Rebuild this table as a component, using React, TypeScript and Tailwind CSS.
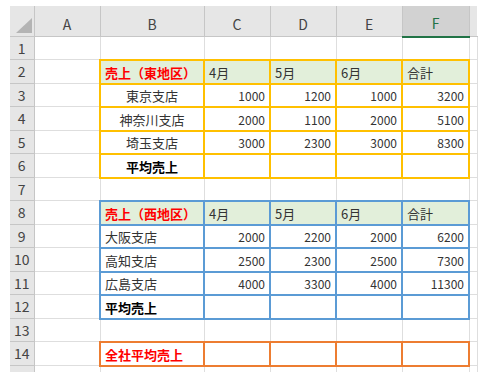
import React from "react";

type Cell = {
    text?: string;
    border: string;
    extra?: string;
};

const GRID = "border border-[#dedede]";
const YEL = "border-2 border-[#ffc000]";
const BLU = "border-2 border-[#5b9bd5]";
const ORG = "border-2 border-[#ed7d31]";

const HEAD_FILL = "bg-[#e2efda]";
const RED = "text-[#ff0000] font-bold";
const NUM = "text-right text-[12px]";

const blank = (n: number): Cell[] => Array.from({length: n}, () => ({border: GRID}));

const tableHead = (title: string, border: string): Cell[] => [
    {border: GRID},
    {text: title, border, extra: `${HEAD_FILL} ${RED}`},
    {text: "4月", border, extra: HEAD_FILL},
    {text: "5月", border, extra: HEAD_FILL},
    {text: "6月", border, extra: HEAD_FILL},
    {text: "合計", border, extra: HEAD_FILL},
    {border: GRID},
];

const dataRow = (name: string, nums: string[], border: string, nameCls: string): Cell[] => [
    {border: GRID},
    {text: name, border, extra: nameCls},
    ...nums.map((n) => ({text: n, border, extra: NUM})),
    {border: GRID},
];

const avgRow = (border: string, nameCls: string): Cell[] => [
    {border: GRID},
    {text: "平均売上", border, extra: `font-bold text-black ${nameCls}`},
    {border},
    {border},
    {border},
    {border},
    {border: GRID},
];

const rows: Cell[][] = [
    blank(7),
    tableHead("売上（東地区）", YEL),
    dataRow("東京支店", ["1000", "1200", "1000", "3200"], YEL, "text-center"),
    dataRow("神奈川支店", ["2000", "1100", "2000", "5100"], YEL, "text-center"),
    dataRow("埼玉支店", ["3000", "2300", "3000", "8300"], YEL, "text-center"),
    avgRow(YEL, "text-center"),
    blank(7),
    tableHead("売上（西地区）", BLU),
    dataRow("大阪支店", ["2000", "2200", "2000", "6200"], BLU, "text-left"),
    dataRow("高知支店", ["2500", "2300", "2500", "7300"], BLU, "text-left"),
    dataRow("広島支店", ["4000", "3300", "4000", "11300"], BLU, "text-left"),
    avgRow(BLU, "text-left"),
    blank(7),
    [
        {border: GRID},
        {text: "全社平均売上", border: ORG, extra: RED},
        {border: ORG},
        {border: ORG},
        {border: ORG},
        {border: ORG},
        {border: GRID},
    ],
    blank(7),
];

const letters = ["A", "B", "C", "D", "E", "F"];

export default function App() {
    return (
        <div className="w-[483px] h-[375px] bg-white pl-[10px] pt-[6px] overflow-hidden font-['Noto_Sans_CJK_JP','Noto_Sans',sans-serif] text-[13px] text-[#333]">
            <div className="h-[366px] overflow-hidden">
                <table className="table-fixed border-collapse w-[467px]">
                    <colgroup>
                        <col className="w-[24px]" />
                        <col className="w-[66px]" />
                        <col className="w-[104px]" />
                        <col className="w-[66px]" />
                        <col className="w-[66px]" />
                        <col className="w-[66px]" />
                        <col className="w-[67px]" />
                        <col className="w-[8px]" />
                    </colgroup>
                    <thead>
                    <tr className="h-[30px]">
                        <th className="bg-[#e6e6e6] border border-[#c6c6c6] border-t-0 border-l-0 p-0">
                            <svg width="24" height="30" viewBox="0 0 24 30" className="block">
                                <polygon points="6,27 22,27 22,12" fill="#b4b4b4" />
                            </svg>
                        </th>
                        {letters.map((l) =>
                            l === "F" ? (
                                <th key={l}
                                    className="bg-[#d2d2d2] border border-[#c6c6c6] border-t-0 border-b-2 border-b-[#217346] pt-[6px] font-normal text-[14px] text-[#217346]">
                                    {l}
                                </th>
                            ) : (
                                <th key={l}
                                    className="bg-[#e6e6e6] border border-[#c6c6c6] border-t-0 pt-[6px] font-normal text-[14px] text-[#444]">
                                    {l}
                                </th>
                            )
                        )}
                        <th className="bg-[#e6e6e6] border border-[#c6c6c6] border-t-0 border-r-0"></th>
                    </tr>
                    </thead>
                    <tbody>
                    {rows.map((cells, i) => (
                        <tr key={i} className={i % 2 === 0 ? "h-[23px]" : "h-[24px]"}>
                            <td className="bg-[#e6e6e6] border border-[#c6c6c6] border-l-0 text-center align-middle text-[14px] text-[#444] p-0">
                                {i < 14 ? i + 1 : ""}
                            </td>
                            {cells.map((c, j) => (
                                <td key={j}
                                    className={`${c.border} ${c.extra ?? ""} px-[4px] pt-0 pb-[1px] align-bottom leading-[18px] whitespace-nowrap overflow-hidden`}>
                                    {c.text}
                                </td>
                            ))}
                        </tr>
                    ))}
                    </tbody>
                </table>
            </div>
        </div>
    );
}
